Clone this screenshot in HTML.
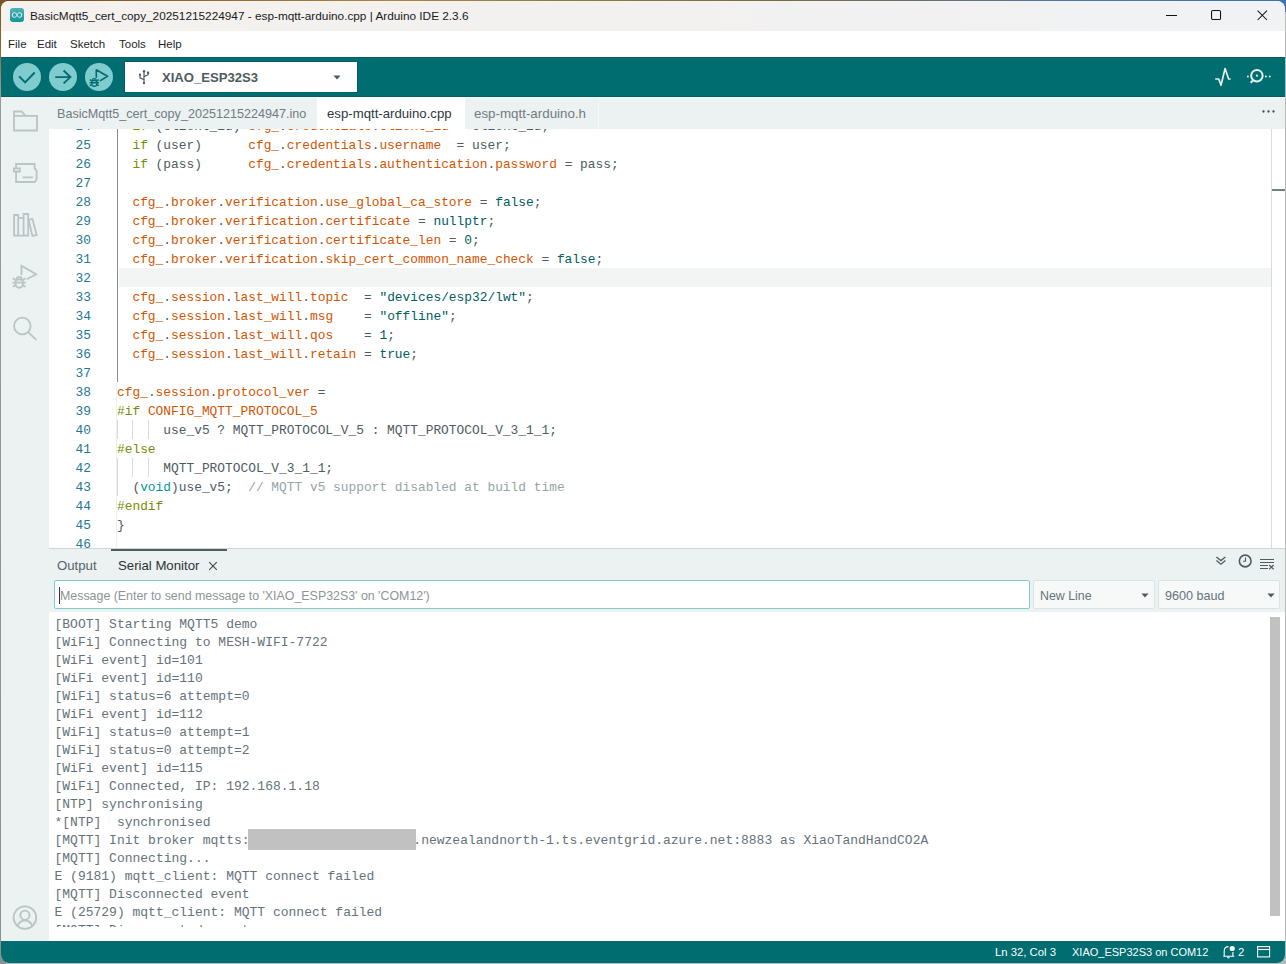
<!DOCTYPE html>
<html><head><meta charset="utf-8">
<style>
*{box-sizing:border-box;margin:0;padding:0}
html,body{width:1286px;height:964px;overflow:hidden}
body{background:#b9b9b9;font-family:"Liberation Sans",sans-serif;position:relative}
.abs{position:absolute}
#bgtop{position:absolute;left:0;top:0;width:1286px;height:12px;background:linear-gradient(90deg,#6b4a1c 0%,#a58a45 30%,#7c6a40 60%,#4f79a8 85%,#3d72b3 100%)}
#bgleft{position:absolute;left:0;top:0;width:6px;height:964px;background:linear-gradient(180deg,#7a5520 0,#8a6a30 50px,#9a9a9a 90px,#8f8f8f 100%)}
#win{position:absolute;left:1px;top:1px;width:1284px;height:962px;border-radius:8px;overflow:hidden;background:#fff}
#title{left:0;top:0;width:1284px;height:30px;background:linear-gradient(90deg,#f4f1ee 0%,#f3f1f0 50%,#f0f2f4 100%)}
#menu{left:0;top:30px;width:1284px;height:26px;background:#fff}
#toolbar{left:0;top:56px;width:1284px;height:40px;background:#006d70;box-shadow:inset 0 1px 0 #005f62,inset 0 -1px 0 #005f62}
#tabs{left:48px;top:96px;width:1236px;height:32px;background:#ecf1f1;box-shadow:inset 0 1px 0 #f8fafa}
#side{left:0;top:96px;width:48px;height:844px;background:#ecf1f1}
#editor{left:48px;top:128px;width:1236px;height:419px;background:#fff;overflow:hidden}
#panelhdr{left:48px;top:547px;width:1236px;height:64px;background:#ecf1f1;border-top:1px solid #cfd4d4}
#serial{left:48px;top:611px;width:1236px;height:329px;background:#fff;overflow:hidden}
#status{left:0;top:940px;width:1284px;height:22px;background:#006d70}
.t{position:absolute;white-space:pre;line-height:1}
.ttl{font-size:11.8px;color:#1a1a1a;left:29px;top:10px}
.mn{font-size:11.5px;color:#1f1f1f;top:38px}
.board{left:124px;top:5px;width:232px;height:30px;background:#fff;box-shadow:0 0 0 1px #005f62}
.tab{position:absolute;top:0;height:32px;font-size:13px;color:#707c81;padding-left:8px;line-height:34px;white-space:pre}
.code{font-family:"Liberation Mono",monospace;font-size:12.87px;line-height:19px;color:#4e5b61}
.ln{position:absolute;left:68px;height:19px;white-space:pre}
.lnum{position:absolute;left:0;width:42px;text-align:right;color:#237893;height:19px}
.ser{font-family:"Liberation Mono",monospace;font-size:13px;line-height:18px;color:#66727a;position:absolute;left:5.5px;top:4px;white-space:pre}
.serclip{position:absolute;left:0;top:0;width:1220px;height:315px;overflow:hidden}
svg{position:absolute;overflow:visible}
</style></head><body>
<div id="bgtop"></div><div id="bgleft"></div>
<div id="win">
  <div id="title" class="abs">
    <svg style="left:9px;top:7px" width="14" height="14" viewBox="0 0 14 14">
      <defs><linearGradient id="lg" x1="0" y1="0" x2="0" y2="1"><stop offset="0" stop-color="#4db3b7"/><stop offset="1" stop-color="#12969b"/></linearGradient></defs>
      <rect x="0" y="0" width="14" height="14" rx="3" fill="url(#lg)"/>
      <path d="M4.6 4.6 a2.4 2.4 0 1 0 0 4.8 c1.4 0 2.4 -2.4 2.4 -2.4 s1 -2.4 2.4 -2.4 a2.4 2.4 0 1 1 0 4.8 c-1.4 0 -2.4 -2.4 -2.4 -2.4 s-1 -2.4 -2.4 -2.4z" fill="none" stroke="#e6f4f4" stroke-width="1"/>
    </svg>
    <div class="t ttl">BasicMqtt5_cert_copy_20251215224947 - esp-mqtt-arduino.cpp | Arduino IDE 2.3.6</div>
    <svg style="left:1165px;top:14px" width="12" height="2"><rect x="0" y="0" width="11" height="1" fill="#111"/></svg>
    <svg style="left:1210px;top:9px" width="12" height="12"><rect x="0.55" y="0.55" width="9" height="9" rx="1.4" fill="none" stroke="#111" stroke-width="1.05"/></svg>
    <svg style="left:1256px;top:9px" width="12" height="12"><path d="M0.6 0.6L10 10M10 0.6L0.6 10" stroke="#111" stroke-width="1.05"/></svg>
  </div>
  <div id="menu" class="abs">
    <div class="t mn" style="left:7px;top:8px">File</div>
    <div class="t mn" style="left:36px;top:8px">Edit</div>
    <div class="t mn" style="left:69px;top:8px">Sketch</div>
    <div class="t mn" style="left:118px;top:8px">Tools</div>
    <div class="t mn" style="left:157px;top:8px">Help</div>
  </div>
  <div id="toolbar" class="abs">
    <svg style="left:12px;top:6px" width="28" height="28" viewBox="0 0 28 28">
      <circle cx="14" cy="14" r="14" fill="#7fcbcd"/>
      <path d="M6.1 13.4L12.1 19.5L21.7 9.5" fill="none" stroke="#006d70" stroke-width="1.9"/>
    </svg>
    <svg style="left:48px;top:6px" width="28" height="28" viewBox="0 0 28 28">
      <circle cx="14" cy="14" r="14" fill="#7fcbcd"/>
      <path d="M6.2 14.1H21.9M14.6 7.5L21.4 14.1L14.6 20.4" fill="none" stroke="#006d70" stroke-width="1.9"/>
    </svg>
    <svg style="left:84px;top:6px" width="28" height="28" viewBox="0 0 28 28">
      <circle cx="14" cy="14" r="14" fill="#7fcbcd"/>
      <path d="M11.3 14.2V6.8L22.5 13.3L15.4 17.6" fill="none" stroke="#006d70" stroke-width="1.6" stroke-linejoin="round" stroke-linecap="round"/>
      <g stroke="#006d70" stroke-width="1.4" fill="none">
        <path d="M7.4 17.5A1.9 1.9 0 0 1 11.2 17.5"/>
        <path d="M6.6 19.7C6.6 17.9 7.5 17.4 9.3 17.4C11.1 17.4 12 17.9 12 19.7C12 22.3 10.9 23.4 9.3 23.4C7.7 23.4 6.6 22.3 6.6 19.7Z"/>
        <path d="M4.6 19.7H14M4.8 16.6L6.7 17.9M13.8 16.6L11.9 17.9M4.8 22.7L6.7 21.6M13.8 22.7L11.9 21.6"/>
      </g>
    </svg>
    <div class="abs board">
      <svg style="left:14px;top:8px" width="12" height="14" viewBox="0 0 12 14">
        <g stroke="#4e5b61" stroke-width="1.2" fill="none">
          <path d="M5 1V13.5M1 5V7.8L5 9.7M9.1 3.2V4.7L5 6.6"/>
        </g>
        <circle cx="5" cy="1.2" r="1.2" fill="#4e5b61"/>
        <circle cx="1" cy="4.7" r="1.1" fill="#4e5b61"/>
        <rect x="8" y="1.6" width="2.2" height="2.2" fill="#4e5b61"/>
        <circle cx="5" cy="13.2" r="1.1" fill="#4e5b61"/>
      </svg>
      <div class="t" style="left:37px;top:9px;font-size:13.1px;font-weight:bold;color:#4e5b61">XIAO_ESP32S3</div>
      <svg style="left:207px;top:13px" width="10" height="6"><path d="M1.4 0.6H8.6L5 4.6z" fill="#4e5b61"/></svg>
    </div>
    <svg style="left:1214px;top:10.4px" width="18" height="19" viewBox="0 0 18 19">
      <path d="M0.2 12H3.7L6 18.3L10.1 1.5L13.6 12H15.7" fill="none" stroke="#e6eded" stroke-width="1.7" stroke-linejoin="round"/>
    </svg>
    <svg style="left:1245.2px;top:10.1px" width="26" height="18" viewBox="0 0 26 18">
      <g fill="none" stroke="#e6eded" stroke-width="2"><circle cx="10.9" cy="8.7" r="5.75"/><path d="M7.2 13.2L4.6 15.8"/></g>
      <circle cx="10.9" cy="8.7" r="1.1" fill="#e6eded"/>
      <circle cx="1.9" cy="9.5" r="1" fill="#e6eded"/>
      <circle cx="19.9" cy="9.5" r="1" fill="#e6eded"/>
      <circle cx="23.7" cy="9.5" r="1" fill="#e6eded"/>
    </svg>
  </div>
  <div id="side" class="abs">
    <svg style="left:0;top:0" width="48" height="844" viewBox="1 97 48 844">
      <g fill="none" stroke="#bac4c5" stroke-width="1.8">
        <path d="M14 130.5V111.5H21.6L25.5 115.9H37V130.5Z M14 115.9H25.5"/>
        <path d="M16.1 167.4V164H34.6V168.3L36.6 170.4V179.5L34.6 182H16.1V172.4 M13.9 168.3H19.9V171.5H13.9Z M22.5 177.4H32.9"/>
        <path d="M14.1 235.6V215H18.2V235.6Z M18.2 217.8H23.6V235.6 M23.6 235.6V214H28.2V235.6H14.1 M28.7 219.9L32.4 219L36.7 235L32.4 236Z"/>
        <path d="M21.5 275V265.7L36.2 274.2L26.7 279.2"/>
        <circle cx="22.3" cy="326" r="8.3"/><path d="M28.4 332.3L36.3 339.9"/>
        <circle cx="24.9" cy="917.6" r="11.3"/><circle cx="24.9" cy="915.2" r="4.6"/><path d="M17.5 926.2C19 922 22 920.5 24.9 920.5C27.8 920.5 30.8 922 32.3 926.2"/>
      </g>
      <g transform="translate(19.2,282.6) scale(1.4)" stroke="#bac4c5" stroke-width="1.25" fill="none">
        <path d="M-1.9 -2.2A1.9 1.9 0 0 1 1.9 -2.2"/>
        <path d="M-2.7 0C-2.7 -1.8 -1.8 -2.3 0 -2.3C1.8 -2.3 2.7 -1.8 2.7 0C2.7 2.6 1.6 3.7 0 3.7C-1.6 3.7 -2.7 2.6 -2.7 0Z"/>
        <path d="M-4.7 0H4.7M-4.5 -3.1L-2.6 -1.8M4.5 -3.1L2.6 -1.8M-4.5 3L-2.6 1.9M4.5 3L2.6 1.9"/>
      </g>
    </svg>
  </div>
  <div id="tabs" class="abs">
    <div class="tab" style="left:0;width:268px;padding-left:8px;font-size:12.6px">BasicMqtt5_cert_copy_20251215224947.ino</div>
    <div class="tab" style="left:268px;width:148px;background:#fff;color:#2e373b;padding-left:10px;font-size:13.2px">esp-mqtt-arduino.cpp</div>
    <div class="tab" style="left:416px;width:133px;padding-left:9px;font-size:13.35px">esp-mqtt-arduino.h</div>
    <div class="abs" style="left:549px;top:1px;width:1px;height:31px;background:#f6f8f8"></div>
    <svg style="left:1213px;top:13px" width="14" height="4"><circle cx="1.5" cy="1.5" r="1.15" fill="#3e4a50"/><circle cx="6.5" cy="1.5" r="1.15" fill="#3e4a50"/><circle cx="11.5" cy="1.5" r="1.15" fill="#3e4a50"/></svg>
  </div>
  <div id="editor" class="abs code">
    <div class="abs" style="left:70px;top:139px;width:1152px;height:19px;background:#f3f5f5"></div><div class="abs" style="left:68px;top:0;width:1px;height:253px;background:#8b8b8b"></div><div class="abs" style="left:67px;top:254px;width:1px;height:200px;background:#eef0f0"></div><div class="abs" style="left:68px;top:291px;width:1px;height:19px;background:#d9d9d9"></div><div class="abs" style="left:83px;top:291px;width:1px;height:19px;background:#d9d9d9"></div><div class="abs" style="left:99px;top:291px;width:1px;height:19px;background:#d9d9d9"></div><div class="abs" style="left:68px;top:329px;width:1px;height:19px;background:#d9d9d9"></div><div class="abs" style="left:83px;top:329px;width:1px;height:19px;background:#d9d9d9"></div><div class="abs" style="left:99px;top:329px;width:1px;height:19px;background:#d9d9d9"></div><div class="abs" style="left:68px;top:348px;width:1px;height:19px;background:#d9d9d9"></div>
    <div class="lnum" style="top:-12px">24</div><div class="ln" style="top:-12px">  <span style="color:#728e00">if</span> (client_id) <span style="color:#d35400">cfg_</span>.<span style="color:#d35400">credentials</span>.<span style="color:#d35400">client_id</span> = client_id;</div><div class="lnum" style="top:7px">25</div><div class="ln" style="top:7px">  <span style="color:#728e00">if</span> (user)      <span style="color:#d35400">cfg_</span>.<span style="color:#d35400">credentials</span>.<span style="color:#d35400">username</span>  = user;</div><div class="lnum" style="top:26px">26</div><div class="ln" style="top:26px">  <span style="color:#728e00">if</span> (pass)      <span style="color:#d35400">cfg_</span>.<span style="color:#d35400">credentials</span>.<span style="color:#d35400">authentication</span>.<span style="color:#d35400">password</span> = pass;</div><div class="lnum" style="top:45px">27</div><div class="ln" style="top:45px"></div><div class="lnum" style="top:64px">28</div><div class="ln" style="top:64px">  <span style="color:#d35400">cfg_</span>.<span style="color:#d35400">broker</span>.<span style="color:#d35400">verification</span>.<span style="color:#d35400">use_global_ca_store</span> = <span style="color:#005c5f">false</span>;</div><div class="lnum" style="top:83px">29</div><div class="ln" style="top:83px">  <span style="color:#d35400">cfg_</span>.<span style="color:#d35400">broker</span>.<span style="color:#d35400">verification</span>.<span style="color:#d35400">certificate</span> = <span style="color:#005c5f">nullptr</span>;</div><div class="lnum" style="top:102px">30</div><div class="ln" style="top:102px">  <span style="color:#d35400">cfg_</span>.<span style="color:#d35400">broker</span>.<span style="color:#d35400">verification</span>.<span style="color:#d35400">certificate_len</span> = <span style="color:#005c5f">0</span>;</div><div class="lnum" style="top:121px">31</div><div class="ln" style="top:121px">  <span style="color:#d35400">cfg_</span>.<span style="color:#d35400">broker</span>.<span style="color:#d35400">verification</span>.<span style="color:#d35400">skip_cert_common_name_check</span> = <span style="color:#005c5f">false</span>;</div><div class="lnum" style="top:140px">32</div><div class="ln" style="top:140px"></div><div class="lnum" style="top:159px">33</div><div class="ln" style="top:159px">  <span style="color:#d35400">cfg_</span>.<span style="color:#d35400">session</span>.<span style="color:#d35400">last_will</span>.<span style="color:#d35400">topic</span>  = <span style="color:#005c5f">&quot;devices/esp32/lwt&quot;</span>;</div><div class="lnum" style="top:178px">34</div><div class="ln" style="top:178px">  <span style="color:#d35400">cfg_</span>.<span style="color:#d35400">session</span>.<span style="color:#d35400">last_will</span>.<span style="color:#d35400">msg</span>    = <span style="color:#005c5f">&quot;offline&quot;</span>;</div><div class="lnum" style="top:197px">35</div><div class="ln" style="top:197px">  <span style="color:#d35400">cfg_</span>.<span style="color:#d35400">session</span>.<span style="color:#d35400">last_will</span>.<span style="color:#d35400">qos</span>    = <span style="color:#005c5f">1</span>;</div><div class="lnum" style="top:216px">36</div><div class="ln" style="top:216px">  <span style="color:#d35400">cfg_</span>.<span style="color:#d35400">session</span>.<span style="color:#d35400">last_will</span>.<span style="color:#d35400">retain</span> = <span style="color:#005c5f">true</span>;</div><div class="lnum" style="top:235px">37</div><div class="ln" style="top:235px"></div><div class="lnum" style="top:254px">38</div><div class="ln" style="top:254px"><span style="color:#d35400">cfg_</span>.<span style="color:#d35400">session</span>.<span style="color:#d35400">protocol_ver</span> =</div><div class="lnum" style="top:273px">39</div><div class="ln" style="top:273px"><span style="color:#728e00">#if</span> <span style="color:#d35400">CONFIG_MQTT_PROTOCOL_5</span></div><div class="lnum" style="top:292px">40</div><div class="ln" style="top:292px">      use_v5 ? MQTT_PROTOCOL_V_5 : MQTT_PROTOCOL_V_3_1_1;</div><div class="lnum" style="top:311px">41</div><div class="ln" style="top:311px"><span style="color:#728e00">#else</span></div><div class="lnum" style="top:330px">42</div><div class="ln" style="top:330px">      MQTT_PROTOCOL_V_3_1_1;</div><div class="lnum" style="top:349px">43</div><div class="ln" style="top:349px">  (<span style="color:#00979d">void</span>)use_v5;  <span style="color:#95a5a6">// MQTT v5 support disabled at build time</span></div><div class="lnum" style="top:368px">44</div><div class="ln" style="top:368px"><span style="color:#728e00">#endif</span></div><div class="lnum" style="top:387px">45</div><div class="ln" style="top:387px">}</div><div class="lnum" style="top:406px">46</div><div class="ln" style="top:406px"></div>
    <div class="abs" style="left:1222px;top:0;width:1px;height:419px;background:#d8dcdc"></div>
    <div class="abs" style="left:1223px;top:60px;width:13px;height:2px;background:#737d84"></div>
  </div>
  <div id="panelhdr" class="abs">
    <div class="abs" style="left:62px;top:0;width:116px;height:2px;background:#4e5b61"></div>
    <div class="t" style="left:8px;top:10px;font-size:13.2px;color:#56636a">Output</div>
    <div class="t" style="left:69px;top:10px;font-size:13.2px;color:#2b3337">Serial Monitor</div>
    <svg style="left:158px;top:12px" width="11" height="11"><path d="M2.2 1.2L9.8 8.8M9.8 1.2L2.2 8.8" stroke="#3e4a50" stroke-width="1.1"/></svg>
    <svg style="left:1166px;top:7px" width="12" height="10" viewBox="0 0 12 10"><path d="M1.4 1L5.9 4.6L10.4 1M1.4 4.6L5.9 8.2L10.4 4.6" fill="none" stroke="#4e5b61" stroke-width="1.3"/></svg>
    <svg style="left:1189px;top:5px" width="15" height="15" viewBox="0 0 15 15"><circle cx="7.2" cy="7" r="5.85" fill="none" stroke="#4e5b61" stroke-width="1.6"/><path d="M7.5 3.4V7.3H5" fill="none" stroke="#4e5b61" stroke-width="1.1"/></svg>
    <svg style="left:1210px;top:10px" width="16" height="11" viewBox="0 0 16 11"><path d="M1 0.5H15M1 3.5H15M1 6.5H9M1 9.5H9" stroke="#4e5b61" stroke-width="1"/><path d="M10.2 6L14.6 10.2M14.6 6L10.2 10.2" stroke="#4e5b61" stroke-width="1.2"/></svg>
    <div class="abs" style="left:5px;top:31px;width:976px;height:29px;background:#fff;border:1px solid #7fcbcd;border-radius:2px"></div>
    <div class="abs" style="left:10px;top:38px;width:1px;height:17px;background:#333"></div>
    <div class="t" style="left:11px;top:41px;font-size:12.4px;color:#8c9597">Message (Enter to send message to 'XIAO_ESP32S3' on 'COM12')</div>
    <div class="abs" style="left:984px;top:31px;width:122px;height:29px;background:#f7f9f9;border:1px solid #dae3e3;border-radius:2px"></div>
    <div class="t" style="left:991px;top:41px;font-size:12.4px;color:#66737a">New Line</div>
    <svg style="left:1091px;top:44px" width="10" height="6"><path d="M1.4 0.6H8.6L5 4.6z" fill="#4e5b61"/></svg>
    <div class="abs" style="left:1109px;top:31px;width:122px;height:29px;background:#f7f9f9;border:1px solid #dae3e3;border-radius:2px"></div>
    <div class="t" style="left:1116px;top:41px;font-size:12.6px;color:#66737a">9600 baud</div>
    <svg style="left:1217px;top:44px" width="10" height="6"><path d="M1.4 0.6H8.6L5 4.6z" fill="#4e5b61"/></svg>
  </div>
  <div id="serial" class="abs">
    <div class="serclip"><div class="ser">[BOOT] Starting MQTT5 demo
[WiFi] Connecting to MESH-WIFI-7722
[WiFi event] id=101
[WiFi event] id=110
[WiFi] status=6 attempt=0
[WiFi event] id=112
[WiFi] status=0 attempt=1
[WiFi] status=0 attempt=2
[WiFi event] id=115
[WiFi] Connected, IP: 192.168.1.18
[NTP] synchronising
*[NTP]  synchronised
[MQTT] Init broker mqtts:xxxxxxxxxxxxxxxxxxxxx.newzealandnorth-1.ts.eventgrid.azure.net:8883 as XiaoTandHandCO2A
[MQTT] Connecting...
E (9181) mqtt_client: MQTT connect failed
[MQTT] Disconnected event
E (25729) mqtt_client: MQTT connect failed
[MQTT] Disconnected event</div></div>
    <div class="abs" style="left:199px;top:217px;width:168px;height:21px;background:#c1c1c1"></div>
    <div class="abs" style="left:1221px;top:5px;width:10px;height:299px;background:#c1c1c1"></div>
  </div>
  <div id="status" class="abs">
    <div class="t" style="left:994px;top:6px;font-size:11.3px;color:#fff">Ln 32, Col 3</div>
    <div class="t" style="left:1071px;top:6px;font-size:11px;color:#fff">XIAO_ESP32S3 on COM12</div>
    <svg style="left:1221px;top:4px" width="16" height="16" viewBox="0 0 16 16"><path d="M1.3 11.3H12.3M2.2 11V6.3C2.2 3.3 4 1.6 6.5 1.6M10.9 7V11" fill="none" stroke="#fff" stroke-width="1.1"/><path d="M5.4 12.3Q6.4 13.7 7.4 12.3" fill="none" stroke="#fff" stroke-width="1.1"/><circle cx="10.2" cy="3.5" r="2.6" fill="#fff"/></svg>
    <div class="t" style="left:1237px;top:6px;font-size:11.3px;color:#fff">2</div>
    <svg style="left:1255px;top:5px" width="14" height="12" viewBox="0 0 14 12"><rect x="1.6" y="0.6" width="12" height="10.3" fill="none" stroke="#fff" stroke-width="1.1"/><path d="M1.6 3.5H13.6" stroke="#fff" stroke-width="1.1"/></svg>
  </div>
</div>
</body></html>
